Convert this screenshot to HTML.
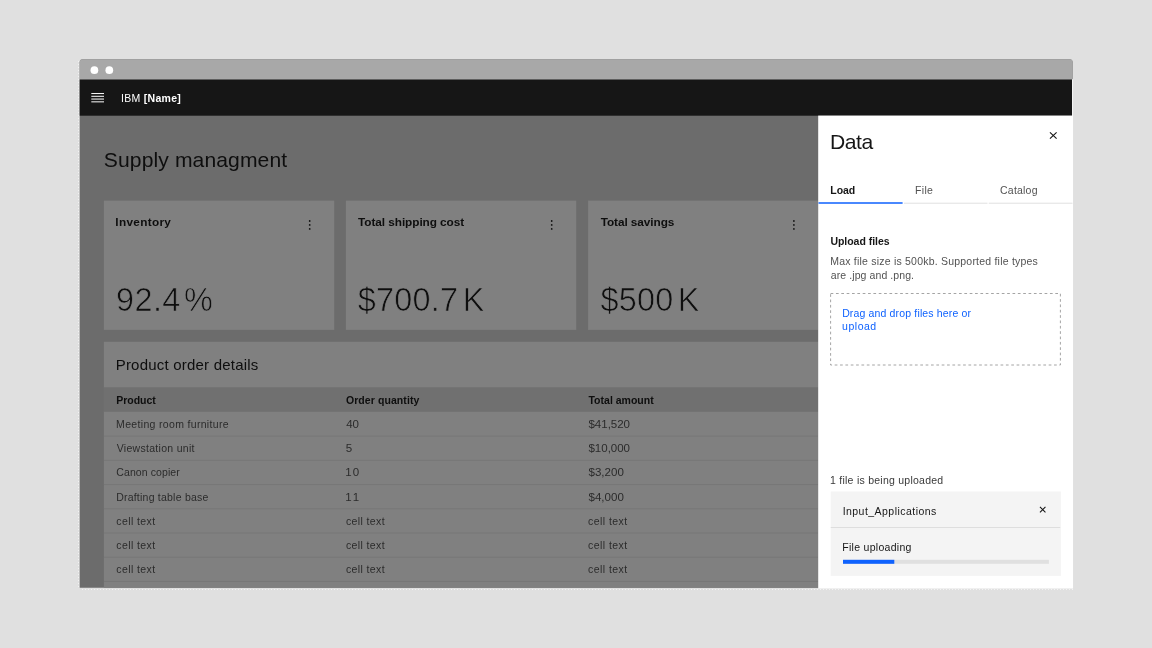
<!DOCTYPE html>
<html lang="en">
<head>
<meta charset="utf-8">
<title>Supply managment</title>
<style>
html,body{margin:0;padding:0;}
body{width:1152px;height:648px;background:#e0e0e0;position:relative;overflow:hidden;font-family:"Liberation Sans",sans-serif;}
#art{position:absolute;left:0;top:0;}
.t{position:absolute;white-space:nowrap;line-height:1;will-change:transform;}
.thin{-webkit-text-stroke:0.7px #808080;}
.u{margin-left:3px;}
.uk{margin-left:4.3px;}
</style>
</head>
<body>
<svg id="art" width="1152" height="648" viewBox="0 0 1152 648">
<defs><clipPath id="winclip"><path d="M79.7 587.8V62.3a3 3 0 0 1 3-3H1069.6a3 3 0 0 1 3 3V587.8Z"/></clipPath></defs>
<path d="M78.5 61V588" stroke="#f3f3f3" stroke-width="1" stroke-dasharray="1 2" fill="none"/>
<path d="M82 589.5H1073" stroke="#f3f3f3" stroke-width="1" stroke-dasharray="1 2" fill="none"/>
<g clip-path="url(#winclip)">
<rect x="79" y="59" width="995" height="530" fill="#6c6c6c"/>
<rect x="79" y="59" width="995" height="20.5" fill="#a8a8a8"/>
<rect x="79" y="78.9" width="995" height="0.7" fill="#bcbcbc"/>
<rect x="79" y="79.5" width="993.1" height="36.2" fill="#161616"/>
<circle cx="94.4" cy="70.15" r="3.85" fill="#fff"/>
<circle cx="109.3" cy="70.15" r="3.85" fill="#fff"/>
<path d="M91.3 93.55H104M91.3 96.3H104M91.3 99.05H104M91.3 101.85H104" stroke="#fff" stroke-width="1" fill="none"/>
<rect x="103.9" y="200.6" width="230.3" height="129.3" fill="#808080"/>
<rect x="345.9" y="200.6" width="230.3" height="129.3" fill="#808080"/>
<rect x="588.1" y="200.6" width="230.3" height="129.3" fill="#808080"/>
<circle cx="309.70" cy="221.00" r="0.88" fill="#111111"/>
<circle cx="309.70" cy="224.95" r="0.88" fill="#111111"/>
<circle cx="309.70" cy="228.90" r="0.88" fill="#111111"/>
<circle cx="551.70" cy="221.00" r="0.88" fill="#111111"/>
<circle cx="551.70" cy="224.95" r="0.88" fill="#111111"/>
<circle cx="551.70" cy="228.90" r="0.88" fill="#111111"/>
<circle cx="793.90" cy="221.00" r="0.88" fill="#111111"/>
<circle cx="793.90" cy="224.95" r="0.88" fill="#111111"/>
<circle cx="793.90" cy="228.90" r="0.88" fill="#111111"/>
<rect x="103.9" y="341.8" width="715" height="250" fill="#808080"/>
<rect x="103.9" y="387.3" width="715" height="24.5" fill="#707070"/>
<rect x="103.9" y="435.62" width="715" height="1" fill="#777777"/>
<rect x="103.9" y="459.84" width="715" height="1" fill="#777777"/>
<rect x="103.9" y="484.06" width="715" height="1" fill="#777777"/>
<rect x="103.9" y="508.28" width="715" height="1" fill="#777777"/>
<rect x="103.9" y="532.50" width="715" height="1" fill="#777777"/>
<rect x="103.9" y="556.72" width="715" height="1" fill="#777777"/>
<rect x="103.9" y="580.94" width="715" height="1" fill="#777777"/>
</g>
<rect x="818.2" y="115.6" width="254.85" height="472.9" fill="#fff"/>
<rect x="1072.1" y="79.3" width="0.95" height="37" fill="#fff"/>
<path d="M1049.95 132.3L1056.6 138.7M1056.6 132.3L1049.95 138.7" stroke="#161616" stroke-width="1.1" fill="none"/>
<rect x="818.5" y="202.25" width="84.1" height="1.5" fill="#0f62fe"/>
<rect x="904" y="202.7" width="83.5" height="1" fill="#e0e0e0"/>
<rect x="988.7" y="202.7" width="83.8" height="1" fill="#e0e0e0"/>
<rect x="830.6" y="293.5" width="229.8" height="71.5" fill="none" stroke="#8d8d8d" stroke-width="0.8" stroke-dasharray="2.7 2.65"/>
<rect x="830.7" y="491.5" width="230.2" height="84.4" fill="#f4f4f4"/>
<rect x="830.7" y="527.0" width="229.5" height="0.9" fill="#dcdcdc"/>
<path d="M1039.95 506.85L1045.45 512.35M1045.45 506.85L1039.95 512.35" stroke="#161616" stroke-width="1.05" fill="none"/>
<rect x="843" y="559.8" width="205.9" height="4" fill="#e0e0e0"/>
<rect x="843" y="559.8" width="51.3" height="4" fill="#0f62fe"/>
</svg>
<div class="t" id="t0" style="left:120px;padding-left:0.91px;top:93.00px;font-size:10.5px;font-weight:400;color:#ffffff;letter-spacing:0.302px;">IBM <b>[Name]</b></div>
<div class="t" id="t1" style="left:103px;padding-left:0.86px;top:149.20px;font-size:21.1px;font-weight:400;color:#0e0e0e;letter-spacing:0.100px;">Supply managment</div>
<div class="t" id="t2" style="left:115px;padding-left:0.30px;top:217.35px;font-size:11.8px;font-weight:700;color:#0e0e0e;letter-spacing:0.312px;">Inventory</div>
<div class="t" id="t3" style="left:358px;padding-left:0.10px;top:217.35px;font-size:11.8px;font-weight:700;color:#0e0e0e;letter-spacing:-0.067px;">Total shipping cost</div>
<div class="t" id="t4" style="left:600px;padding-left:0.67px;top:217.35px;font-size:11.8px;font-weight:700;color:#0e0e0e;letter-spacing:-0.066px;">Total savings</div>
<div class="t thin" id="t5" style="left:115px;padding-left:0.88px;top:284.05px;font-size:32.4px;font-weight:400;color:#0e0e0e;letter-spacing:0.489px;">92.4<span class="u">%</span></div>
<div class="t thin" id="t6" style="left:357px;padding-left:0.68px;top:284.05px;font-size:32.4px;font-weight:400;color:#0e0e0e;letter-spacing:0.278px;">$700.7<span class="uk">K</span></div>
<div class="t thin" id="t7" style="left:600px;padding-left:0.40px;top:284.05px;font-size:32.4px;font-weight:400;color:#0e0e0e;letter-spacing:0.275px;">$500<span class="uk">K</span></div>
<div class="t" id="t8" style="left:115px;padding-left:0.70px;top:357.25px;font-size:15px;font-weight:400;color:#0e0e0e;letter-spacing:0.211px;">Product order details</div>
<div class="t" id="t9" style="left:116px;padding-left:0.13px;top:395.00px;font-size:10.5px;font-weight:700;color:#0e0e0e;letter-spacing:0.002px;">Product</div>
<div class="t" id="t10" style="left:345px;padding-left:0.93px;top:395.00px;font-size:10.5px;font-weight:700;color:#0e0e0e;letter-spacing:0.085px;">Order quantity</div>
<div class="t" id="t11" style="left:588px;padding-left:0.46px;top:395.00px;font-size:10.5px;font-weight:700;color:#0e0e0e;letter-spacing:0.011px;">Total amount</div>
<div class="t" id="t12" style="left:116px;padding-left:0.11px;top:419.00px;font-size:10.5px;font-weight:400;color:#2b2b2b;letter-spacing:0.327px;">Meeting room furniture</div>
<div class="t" id="t13" style="left:346px;padding-left:0.21px;top:419.00px;font-size:10.5px;font-weight:400;color:#2b2b2b;letter-spacing:-0.076px;transform:scaleX(1.1);transform-origin:0 0;">40</div>
<div class="t" id="t14" style="left:588px;padding-left:0.43px;top:419.00px;font-size:10.5px;font-weight:400;color:#2b2b2b;letter-spacing:-0.030px;transform:scaleX(1.1);transform-origin:0 0;">$41,520</div>
<div class="t" id="t15" style="left:116px;padding-left:0.69px;top:443.00px;font-size:10.5px;font-weight:400;color:#2b2b2b;letter-spacing:0.300px;">Viewstation unit</div>
<div class="t" id="t16" style="left:345px;padding-left:0.62px;top:443.00px;font-size:10.5px;font-weight:400;color:#2b2b2b;transform:scaleX(1.1);transform-origin:0 0;">5</div>
<div class="t" id="t17" style="left:588px;padding-left:0.43px;top:443.00px;font-size:10.5px;font-weight:400;color:#2b2b2b;letter-spacing:-0.030px;transform:scaleX(1.1);transform-origin:0 0;">$10,000</div>
<div class="t" id="t18" style="left:116px;padding-left:0.29px;top:467.00px;font-size:10.5px;font-weight:400;color:#2b2b2b;letter-spacing:0.097px;">Canon copier</div>
<div class="t" id="t19" style="left:345px;padding-left:0.27px;top:467.00px;font-size:10.5px;font-weight:400;color:#2b2b2b;letter-spacing:0.864px;transform:scaleX(1.1);transform-origin:0 0;">10</div>
<div class="t" id="t20" style="left:588px;padding-left:0.43px;top:467.00px;font-size:10.5px;font-weight:400;color:#2b2b2b;letter-spacing:0.004px;transform:scaleX(1.1);transform-origin:0 0;">$3,200</div>
<div class="t" id="t21" style="left:116px;padding-left:0.14px;top:492.00px;font-size:10.5px;font-weight:400;color:#2b2b2b;letter-spacing:0.226px;">Drafting table base</div>
<div class="t" id="t22" style="left:345px;padding-left:0.27px;top:492.00px;font-size:10.5px;font-weight:400;color:#2b2b2b;letter-spacing:1.606px;transform:scaleX(1.1);transform-origin:0 0;">11</div>
<div class="t" id="t23" style="left:588px;padding-left:0.43px;top:492.00px;font-size:10.5px;font-weight:400;color:#2b2b2b;letter-spacing:0.004px;transform:scaleX(1.1);transform-origin:0 0;">$4,000</div>
<div class="t" id="t24" style="left:116px;padding-left:0.31px;top:516.00px;font-size:10.5px;font-weight:400;color:#2b2b2b;letter-spacing:0.401px;">cell text</div>
<div class="t" id="t25" style="left:345px;padding-left:0.90px;top:516.00px;font-size:10.5px;font-weight:400;color:#2b2b2b;letter-spacing:0.389px;">cell text</div>
<div class="t" id="t26" style="left:588px;padding-left:0.08px;top:516.00px;font-size:10.5px;font-weight:400;color:#2b2b2b;letter-spacing:0.443px;">cell text</div>
<div class="t" id="t27" style="left:116px;padding-left:0.31px;top:540.00px;font-size:10.5px;font-weight:400;color:#2b2b2b;letter-spacing:0.401px;">cell text</div>
<div class="t" id="t28" style="left:345px;padding-left:0.90px;top:540.00px;font-size:10.5px;font-weight:400;color:#2b2b2b;letter-spacing:0.389px;">cell text</div>
<div class="t" id="t29" style="left:588px;padding-left:0.08px;top:540.00px;font-size:10.5px;font-weight:400;color:#2b2b2b;letter-spacing:0.443px;">cell text</div>
<div class="t" id="t30" style="left:116px;padding-left:0.31px;top:564.00px;font-size:10.5px;font-weight:400;color:#2b2b2b;letter-spacing:0.401px;">cell text</div>
<div class="t" id="t31" style="left:345px;padding-left:0.90px;top:564.00px;font-size:10.5px;font-weight:400;color:#2b2b2b;letter-spacing:0.389px;">cell text</div>
<div class="t" id="t32" style="left:588px;padding-left:0.08px;top:564.00px;font-size:10.5px;font-weight:400;color:#2b2b2b;letter-spacing:0.443px;">cell text</div>
<div class="t" id="t33" style="left:829px;padding-left:0.88px;top:131.20px;font-size:21.1px;font-weight:400;color:#161616;letter-spacing:-0.401px;">Data</div>
<div class="t" id="t34" style="left:830px;padding-left:0.27px;top:185.00px;font-size:10.5px;font-weight:700;color:#161616;letter-spacing:-0.035px;">Load</div>
<div class="t" id="t35" style="left:914px;padding-left:0.88px;top:185.00px;font-size:10.5px;font-weight:400;color:#525252;letter-spacing:0.388px;">File</div>
<div class="t" id="t36" style="left:1000px;padding-left:0.05px;top:185.00px;font-size:10.5px;font-weight:400;color:#525252;letter-spacing:0.212px;">Catalog</div>
<div class="t" id="t37" style="left:830px;padding-left:0.39px;top:236.00px;font-size:10.5px;font-weight:700;color:#161616;letter-spacing:-0.020px;">Upload files</div>
<div class="t" id="t38" style="left:830px;padding-left:0.25px;top:256.00px;font-size:10.5px;font-weight:400;color:#525252;letter-spacing:0.213px;">Max file size is 500kb. Supported file types</div>
<div class="t" id="t39" style="left:830px;padding-left:0.78px;top:270.00px;font-size:10.5px;font-weight:400;color:#525252;letter-spacing:0.091px;">are .jpg and .png.</div>
<div class="t" id="t40" style="left:842px;padding-left:0.14px;top:308.00px;font-size:10.5px;font-weight:400;color:#0f62fe;letter-spacing:0.154px;">Drag and drop files here or</div>
<div class="t" id="t41" style="left:842px;padding-left:0.12px;top:321.00px;font-size:10.5px;font-weight:400;color:#0f62fe;letter-spacing:0.513px;">upload</div>
<div class="t" id="t42" style="left:830px;padding-left:0.04px;top:475.00px;font-size:10.5px;font-weight:400;color:#393939;letter-spacing:0.250px;">1 file is being uploaded</div>
<div class="t" id="t43" style="left:842px;padding-left:0.63px;top:506.00px;font-size:10.5px;font-weight:400;color:#161616;letter-spacing:0.462px;">Input_Applications</div>
<div class="t" id="t44" style="left:842px;padding-left:0.22px;top:542.00px;font-size:10.5px;font-weight:400;color:#161616;letter-spacing:0.297px;">File uploading</div>
</body>
</html>
